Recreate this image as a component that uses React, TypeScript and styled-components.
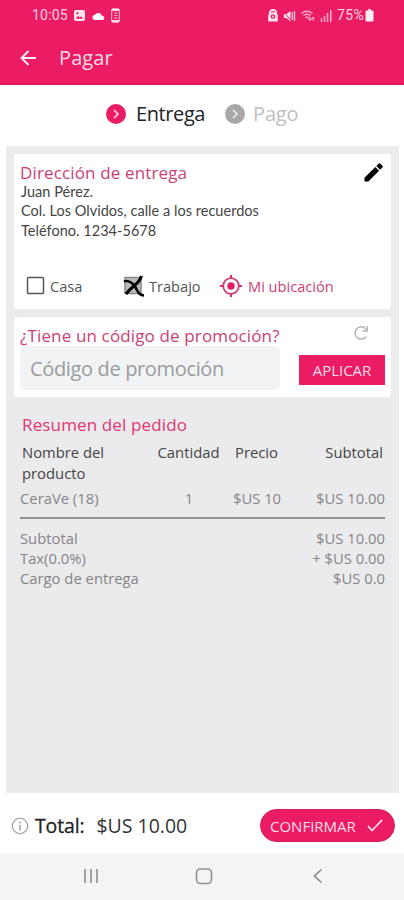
import React from "react";
import styled, { createGlobalStyle } from "styled-components";

const PINK = "#eb1c63";
const ROSE = "#cb3f77";

const Global = createGlobalStyle`
  * { box-sizing: border-box; }
  body { margin: 0; background: #fff; font-family: "Open Sans", "Noto Sans", sans-serif; }
`;

const Screen = styled.div`
  width: 404px;
  height: 900px;
  display: flex;
  flex-direction: column;
  background: #fff;
  overflow: hidden;
  white-space: nowrap;
`;

const Header = styled.header`
  height: 85px;
  background: ${PINK};
  border-bottom: 1px solid #d81459;
  color: #fff;
`;

const StatusBar = styled.div`
  height: 31px;
  padding: 0 30px 0 32px;
  display: flex;
  justify-content: space-between;
  font: 400 14px/31px Roboto, sans-serif;
  color: #ffd3e3;
`;

const StatusGroup = styled.div<{ $gap: number }>`
  display: flex;
  align-items: center;
  gap: ${(p) => p.$gap}px;
`;

const StatusText = styled.span<{ $spacing: number }>`
  letter-spacing: ${(p) => p.$spacing}px;
`;

const BatteryIcon = styled.svg`
  margin-left: -4px;
`;

const AppBar = styled.div`
  height: 53px;
  padding: 1px 0 0 20px;
  display: flex;
  align-items: center;
  gap: 22px;
`;

const Title = styled.h1`
  margin: 0;
  font-size: 20px;
  font-weight: 400;
  line-height: 28px;
  letter-spacing: 0.1px;
  color: #ffdce8;
`;

const Steps = styled.nav`
  height: 61px;
  padding: 0 0 4px 106px;
  display: flex;
  align-items: center;
  gap: 20px;
`;

const Step = styled.div<{ $active?: boolean }>`
  display: flex;
  align-items: center;
  gap: ${(p) => (p.$active ? 10 : 8)}px;
  font-size: 20px;
  line-height: 28px;
  color: ${(p) => (p.$active ? "#222" : "#c0c0c0")};
  letter-spacing: ${(p) => (p.$active ? "-0.4px" : "-0.2px")};
`;

const Panel = styled.main`
  height: 647px;
  margin: 0 5px 0 6px;
  padding: 8px 8px 0;
  display: flex;
  flex-direction: column;
  background: #ebebed;
`;

const Card = styled.section<{ $height: number }>`
  height: ${(p) => p.$height}px;
  flex: none;
  margin-bottom: 8px;
  padding: 8px 6px 0 7px;
  border-radius: 3px;
  background: #fff;
`;

const SpreadRow = styled.div`
  display: flex;
  justify-content: space-between;
  align-items: flex-start;
`;

const SectionTitle = styled.h2`
  margin: 0 0 0 -1px;
  font-size: 17px;
  font-weight: 400;
  line-height: 21px;
  letter-spacing: 0.14px;
  color: ${ROSE};
`;

const Address = styled.address`
  height: 88px;
  margin-top: -1px;
  font: 400 14.5px/19.3px Lato, "Open Sans", sans-serif;
  color: #444;
`;

const AddressLine = styled.div`
  letter-spacing: 0.03px;
`;

const Places = styled.div`
  height: 32px;
  display: grid;
  grid-template-columns: 97px 97px auto;
  align-items: center;
  padding-left: 5px;
`;

const Place = styled.div<{ $accent?: boolean }>`
  display: flex;
  align-items: center;
  gap: ${(p) => (p.$accent ? 6 : 4)}px;
  font-size: 14.6px;
  line-height: 20px;
  color: ${(p) => (p.$accent ? ROSE : "#555")};
`;

const PromoRow = styled.div`
  display: flex;
  align-items: center;
  justify-content: space-between;
`;

const PromoField = styled.div`
  width: 260px;
  height: 44px;
  margin-left: -1px;
  padding-left: 10px;
  border-radius: 5px;
  background: #f2f3f5;
  font-size: 20px;
  line-height: 45px;
  letter-spacing: -0.35px;
  color: #999b9d;
`;

const ApplyButton = styled.button`
  width: 86px;
  height: 30px;
  margin-top: 3px;
  padding: 0;
  border: 0;
  background: ${PINK};
  color: #ffdce8;
  font: 400 15px/30px "Open Sans", sans-serif;
`;

const Summary = styled.section`
  padding: 9px 6px 0;
`;

const SummaryTitle = styled(SectionTitle)`
  margin-left: 2px;
  line-height: 22px;
  color: #e03672;
`;

const Columns = styled.div`
  display: grid;
  grid-template-columns: 130px 78px 58px 1fr;
`;

const HeadRow = styled(Columns)`
  padding: 6px 2px 0;
  grid-template-columns: 127px 79px 57px 1fr;
  font-size: 14.8px;
  line-height: 21px;
  color: #444;
`;

const Cell = styled.span<{ $align?: "center" | "right"; $wrap?: boolean }>`
  text-align: ${(p) => p.$align ?? "left"};
  white-space: ${(p) => (p.$wrap ? "normal" : "nowrap")};
`;

const ItemRow = styled(Columns)`
  height: 35px;
  font-size: 14.8px;
  line-height: 29px;
  color: #858587;
  border-bottom: 2px solid #929294;
`;

const Totals = styled.div`
  padding-top: 9px;
`;

const TotalRow = styled(SpreadRow)`
  font-size: 14.8px;
  line-height: 20px;
  color: #858587;
`;

const Footer = styled.footer`
  height: 61px;
  padding: 4px 9px 0 11px;
  display: flex;
  align-items: center;
  justify-content: space-between;
`;

const GrandTotal = styled.div`
  display: flex;
  align-items: center;
  font-size: 19.5px;
  line-height: 28px;
  color: #333;
`;

const TotalLabel = styled.span`
  margin: 0 12px 0 6px;
  color: #222;
  letter-spacing: -0.15px;
  -webkit-text-stroke: 0.3px #222;
`;

const ConfirmButton = styled.button`
  width: 135px;
  height: 33px;
  padding: 0 11px 0 9px;
  display: flex;
  align-items: center;
  justify-content: space-between;
  border: 1px solid #d61b5c;
  border-radius: 17px;
  background: ${PINK};
  color: #ffdce8;
  font: 400 15px/30px "Open Sans", sans-serif;
`;

const SystemNav = styled.div`
  height: 46px;
  padding: 0 78px 2px 80px;
  display: grid;
  grid-template-columns: 113px 117px 16px;
  align-items: center;
  background: #f4f4f4;
`;

const StepIcon = ({ color }: { color: string }) => (
  <svg width="20" height="20" viewBox="0 0 20 20">
    <circle cx="10" cy="10" r="10" fill={color} />
    <path d="M8 6l4 4-4 4" fill="none" stroke="#fff" strokeOpacity=".85" strokeWidth="1.5" />
  </svg>
);

export default function App() {
  return (
    <Screen>
      <Global />
      <Header>
        <StatusBar>
          <StatusGroup $gap={6.5}>
            <StatusText $spacing={0.2}>10:05</StatusText>
            <svg width="11" height="11" viewBox="0 0 11 11">
              <rect width="11" height="11" rx="2" fill="#ffe4ee" />
              <path d="M1.8 8.8l2.2-3 1.700 1.700 1.400-1.300 2 2.600z" fill={PINK} />
              <circle cx="3.400" cy="3.200" r="1.100" fill={PINK} />
            </svg>
            <svg width="13" height="10" viewBox="0 0 13 10">
              <path d="M3 9a2.500 2.500 0 0 1-.2-5A4 4 0 0 1 10 4.800 2.200 2.200 0 0 1 11 9z" fill="#fff" />
            </svg>
            <svg width="9" height="15" viewBox="0 0 9 15">
              <rect x=".7" y=".7" width="7.600" height="13.600" rx="1.200" fill="none" stroke="#ffc1d7" />
              <path d="M1 2h7M1 13h7" stroke="#ffd9e6" strokeWidth="2" />
              <path d="M3 5h3.500M3 7.500h3.500M3 10h3.500" stroke="#ffb0cc" />
            </svg>
          </StatusGroup>
          <StatusGroup $gap={5}>
            <svg width="10" height="13" viewBox="0 0 10 13">
              <path d="M1 4a4 4 0 0 1 8 0v1l.8 1v6.500H.2V6L1 5z" fill="#ffe4ee" />
              <circle cx="5" cy="7.500" r="2.300" fill={PINK} />
              <circle cx="5" cy="7.500" r="1" fill="#ffe4ee" />
              <path d="M3 2.800h4" stroke={PINK} />
            </svg>
            <svg width="13" height="12" viewBox="0 0 13 12">
              <path d="M1 4h2.500L7.500 1v10.500L3.500 8H1z" fill="#ffe4ee" />
              <path d="M0 1l9 10.500" stroke={PINK} strokeWidth="1" />
              <path d="M9.300 2v8M11.500 1v10" stroke="#ffc9dc" strokeWidth="1.300" />
            </svg>
            <svg width="14" height="12" viewBox="0 0 14 12">
              <path d="M.5 3.500Q6-1 11.500 3.500M2.500 5.700Q6 3 9.500 5.700M4.500 8L6 7l2 1.500" fill="none" stroke="#ffa9c7" strokeWidth="1.500" />
              <path d="M9 6.500v4m0 0L7.500 9M9 10.500L10.500 9M12 11V7m0 0l-1.500 1.500M12 7l1.500 1.500" stroke="#ffc1d7" fill="none" />
            </svg>
            <svg width="12" height="12" viewBox="0 0 12 12">
              <path d="M1.500 8v4M4.500 6v6M7.500 3v9" stroke="#ff9fc2" strokeWidth="1.600" />
              <path d="M10.700 0v12" stroke="#ffc1d7" strokeWidth="1.500" />
            </svg>
            <StatusText $spacing={0.3}>75%</StatusText>
            <BatteryIcon width="9" height="13" viewBox="0 0 9 13">
              <path d="M3 0h3v1.700H3z" fill="#ffd9e6" />
              <rect x=".5" y="1.500" width="8" height="11" rx="1.200" fill="#ffeef4" />
            </BatteryIcon>
          </StatusGroup>
        </StatusBar>
        <AppBar>
          <svg width="17" height="16" viewBox="0 0 17 16">
            <path d="M16 8H2M8.500 1L1.500 8l7 7" fill="none" stroke="#ffeef4" strokeWidth="1.900" />
          </svg>
          <Title>Pagar</Title>
        </AppBar>
      </Header>

      <Steps>
        <Step $active>
          <StepIcon color={PINK} />
          Entrega
        </Step>
        <Step>
          <StepIcon color="#a8a8a8" />
          Pago
        </Step>
      </Steps>

      <Panel>
        <Card $height={155}>
          <SpreadRow>
            <SectionTitle>Dirección de entrega</SectionTitle>
            <svg width="24" height="21" viewBox="0 0 24 21">
              <path d="M3.500 19.500v-3.800L14.300 5l3.800 3.800L7.300 19.500z" fill="#000" />
              <path d="M15.300 4l2.300-2.300q1-.8 1.800 0l2 2q.8.900 0 1.800L19.100 7.800z" fill="#000" />
            </svg>
          </SpreadRow>
          <Address>
            <AddressLine>Juan Pérez.</AddressLine>
            <AddressLine>Col. Los Olvidos, calle a los recuerdos</AddressLine>
            <AddressLine>Teléfono. 1234-5678</AddressLine>
          </Address>
          <Places>
            <Place>
              <svg width="20" height="20" viewBox="0 0 20 20">
                <rect x="1.500" y="1.500" width="16" height="16" rx="1" fill="#fff" stroke="#555" strokeWidth="1.500" />
              </svg>
              Casa
            </Place>
            <Place>
              <svg width="22" height="22" viewBox="0 0 22 22">
                <rect x="2" y="2.500" width="16" height="16" fill="#bcbcbc" stroke="#888" strokeWidth="1.500" />
                <path d="M1 6.500Q4 5 8 7.500T14 15T21 20.500" fill="none" stroke="#000" strokeWidth="2.500" />
                <path d="M18.500 1Q17 6 11.500 10.500T3 19" fill="none" stroke="#000" strokeWidth="3" />
              </svg>
              Trabajo
            </Place>
            <Place $accent>
              <svg width="22" height="22" viewBox="0 0 22 22">
                <circle cx="11" cy="11" r="7.800" fill="none" stroke={ROSE} strokeWidth="1.800" />
                <circle cx="11" cy="11" r="3.700" fill="#e31c60" />
                <path d="M11 0v4M11 18v4M0 11h4M18 11h4" stroke="#d9306b" strokeWidth="2" />
              </svg>
              Mi ubicación
            </Place>
          </Places>
        </Card>

        <Card $height={80}>
          <SpreadRow>
            <SectionTitle>¿Tiene un código de promoción?</SectionTitle>
            <svg width="32" height="16" viewBox="0 0 32 16">
              <path d="M13.300 11.500A6.200 6.200 0 1 1 12.500 3.500L14 5" fill="none" stroke="#b5b5b5" strokeWidth="1.500" />
              <path d="M14.300 1v5H9.300" fill="none" stroke="#b5b5b5" strokeWidth="1.500" />
            </svg>
          </SpreadRow>
          <PromoRow>
            <PromoField>Código de promoción</PromoField>
            <ApplyButton>APLICAR</ApplyButton>
          </PromoRow>
        </Card>

        <Summary>
          <SummaryTitle>Resumen del pedido</SummaryTitle>
          <HeadRow>
            <Cell $wrap>Nombre del producto</Cell>
            <Cell $align="center">Cantidad</Cell>
            <Cell $align="center">Precio</Cell>
            <Cell $align="right">Subtotal</Cell>
          </HeadRow>
          <ItemRow>
            <Cell>CeraVe (18)</Cell>
            <Cell $align="center">1</Cell>
            <Cell $align="center">$US 10</Cell>
            <Cell $align="right">$US 10.00</Cell>
          </ItemRow>
          <Totals>
            <TotalRow>
              <span>Subtotal</span>
              <span>$US 10.00</span>
            </TotalRow>
            <TotalRow>
              <span>Tax(0.0%)</span>
              <span>+ $US 0.00</span>
            </TotalRow>
            <TotalRow>
              <span>Cargo de entrega</span>
              <span>$US 0.0</span>
            </TotalRow>
          </Totals>
        </Summary>
      </Panel>

      <Footer>
        <GrandTotal>
          <svg width="18" height="18" viewBox="0 0 18 18">
            <circle cx="9" cy="9" r="7.700" fill="none" stroke="#999" strokeWidth="1.100" />
            <path d="M9 4.500v2M9 8v5.500" stroke="#999" strokeWidth="1.400" />
          </svg>
          <TotalLabel>Total:</TotalLabel>
          <span>$US 10.00</span>
        </GrandTotal>
        <ConfirmButton>
          CONFIRMAR
          <svg width="16" height="13" viewBox="0 0 16 13">
            <path d="M1 7l4 4.500L15 1" fill="none" stroke="#ffe4ee" strokeWidth="1.800" />
          </svg>
        </ConfirmButton>
      </Footer>

      <SystemNav>
        <svg width="22" height="18" viewBox="0 0 22 18">
          <path d="M5 2v14M11 2v14M17 2v14" stroke="#999" strokeWidth="1.800" />
        </svg>
        <svg width="20" height="20" viewBox="0 0 20 20">
          <rect x="3.500" y="3" width="15" height="14.500" rx="4" fill="none" stroke="#909090" strokeWidth="1.600" />
        </svg>
        <svg width="16" height="18" viewBox="0 0 16 18">
          <path d="M11.500 2.500L4.500 9l7 6.500" fill="none" stroke="#888" strokeWidth="1.600" />
        </svg>
      </SystemNav>
    </Screen>
  );
}
